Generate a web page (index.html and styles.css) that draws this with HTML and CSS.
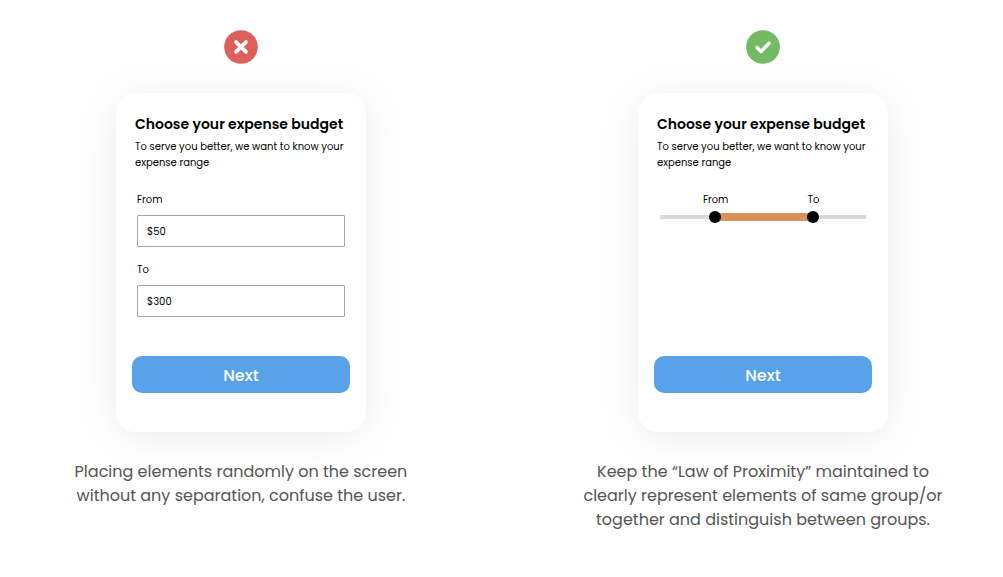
FILE: index.html
```html
<!DOCTYPE html>
<html lang="en">
<head>
    <meta charset="UTF-8">
    <meta name="viewport" content="width=device-width, initial-scale=1.0">
    <title>Law of Proximity</title>
    <link rel="stylesheet" href="styles.css">
</head>
<body>
    <main class="compare">
        <section class="example">
            <svg class="mark" viewBox="0 0 34 34" role="img" aria-label="Don't">
                <circle cx="17" cy="17" r="16.8" fill="#dc5f59"/>
                <path d="M12 12.1l10 9.8M22 12.1l-10 9.8" stroke="#fff" stroke-width="3.8" stroke-linecap="round"/>
            </svg>
            <form class="card">
                <h2 class="title">Choose your expense budget</h2>
                <p class="intro">To serve you better, we want to know your expense range</p>
                <div class="field">
                    <label for="from">From</label>
                    <input id="from" type="text" value="$50">
                </div>
                <div class="field">
                    <label for="to">To</label>
                    <input id="to" type="text" value="$300">
                </div>
                <button class="next" type="button">Next</button>
            </form>
            <p class="caption">Placing elements randomly on the screen<br>without any separation, confuse the user.</p>
        </section>

        <section class="example">
            <svg class="mark" viewBox="0 0 34 34" role="img" aria-label="Do">
                <circle cx="17" cy="17" r="16.8" fill="#74b963"/>
                <path d="M11 17.6l4 4 8-8.4" fill="none" stroke="#fff" stroke-width="3.5" stroke-linecap="round" stroke-linejoin="round"/>
            </svg>
            <form class="card">
                <h2 class="title">Choose your expense budget</h2>
                <p class="intro">To serve you better, we want to know your expense range</p>
                <div class="range">
                    <div class="range-labels">
                        <label for="range-from">From</label>
                        <label for="range-to">To</label>
                    </div>
                    <div class="slider">
                        <input id="range-from" type="range" min="0" max="100" value="25">
                        <input id="range-to" type="range" min="0" max="100" value="76">
                    </div>
                </div>
                <button class="next" type="button">Next</button>
            </form>
            <p class="caption">Keep the “Law of Proximity” maintained to<br>clearly represent elements of same group/or<br>together and distinguish between groups.</p>
        </section>
    </main>
</body>
</html>
```

FILE: styles.css
```css
* { box-sizing: border-box; }
body { margin: 0; background: #fff; color: #000; font-family: Poppins, Inter, sans-serif; }

.compare { display: grid; grid-template-columns: 1fr 1fr; gap: 122px; padding: 30px 40px 48px 41px; }
.example { display: flex; flex-direction: column; align-items: center; }
.mark { width: 34px; height: 34px; margin-bottom: 29px; }

.card {
    display: flex;
    flex-direction: column;
    width: 100%;
    max-width: 250px;
    min-height: 339px;
    padding: 21px 16px 39px;
    border-radius: 20px;
    background: #fff;
    box-shadow: 0 4px 40px rgba(0, 0, 0, 0.08);
}
.title { margin: 0 3px 5px; font-size: 14px; line-height: 20px; font-weight: 600; white-space: nowrap; }
.intro { margin: 0 3px 21px; font-size: 10px; line-height: 16px; }

/* Text fields */
.field { margin: 0 5px 15px; font-size: 10px; line-height: 16px; }
.field label { display: block; margin-bottom: 7px; }
.field input {
    display: block;
    width: 100%;
    height: 32px;
    padding: 2px 9px 0;
    border: 1px solid #a5a5a5;
    border-radius: 1px;
    background: #fff;
    color: #000;
    font: inherit;
}

/* Range slider with two handles */
.range { margin: 0 6px; font-size: 10px; line-height: 16px; }
.range-labels { display: grid; grid-template-columns: 54fr 41fr 5fr; text-align: center; }
.slider {
    position: relative;
    height: 18px;
    background:
        linear-gradient(#d9935a, #d9935a) 55% 50% / 48% 8px no-repeat,
        linear-gradient(#d9d9d9, #d9d9d9) 0 50% / 100% 4px no-repeat;
}
.slider input {
    position: absolute;
    inset: 0;
    width: 100%;
    height: 100%;
    margin: 0;
    background: none;
    -webkit-appearance: none;
    appearance: none;
    pointer-events: none;
}
.slider input::-webkit-slider-thumb {
    -webkit-appearance: none;
    width: 12px;
    height: 12px;
    border-radius: 50%;
    background: #000;
    pointer-events: auto;
}

.next {
    margin-top: auto;
    height: 37px;
    padding: 2px 0 0;
    border: none;
    border-radius: 10px;
    background: #58a2ea;
    color: #fff;
    font: 500 16px/24px Poppins, Inter, sans-serif;
    cursor: pointer;
}
.caption { margin: 28px 0 0; color: #555; font-size: 16px; line-height: 24px; text-align: center; white-space: nowrap; }
```
